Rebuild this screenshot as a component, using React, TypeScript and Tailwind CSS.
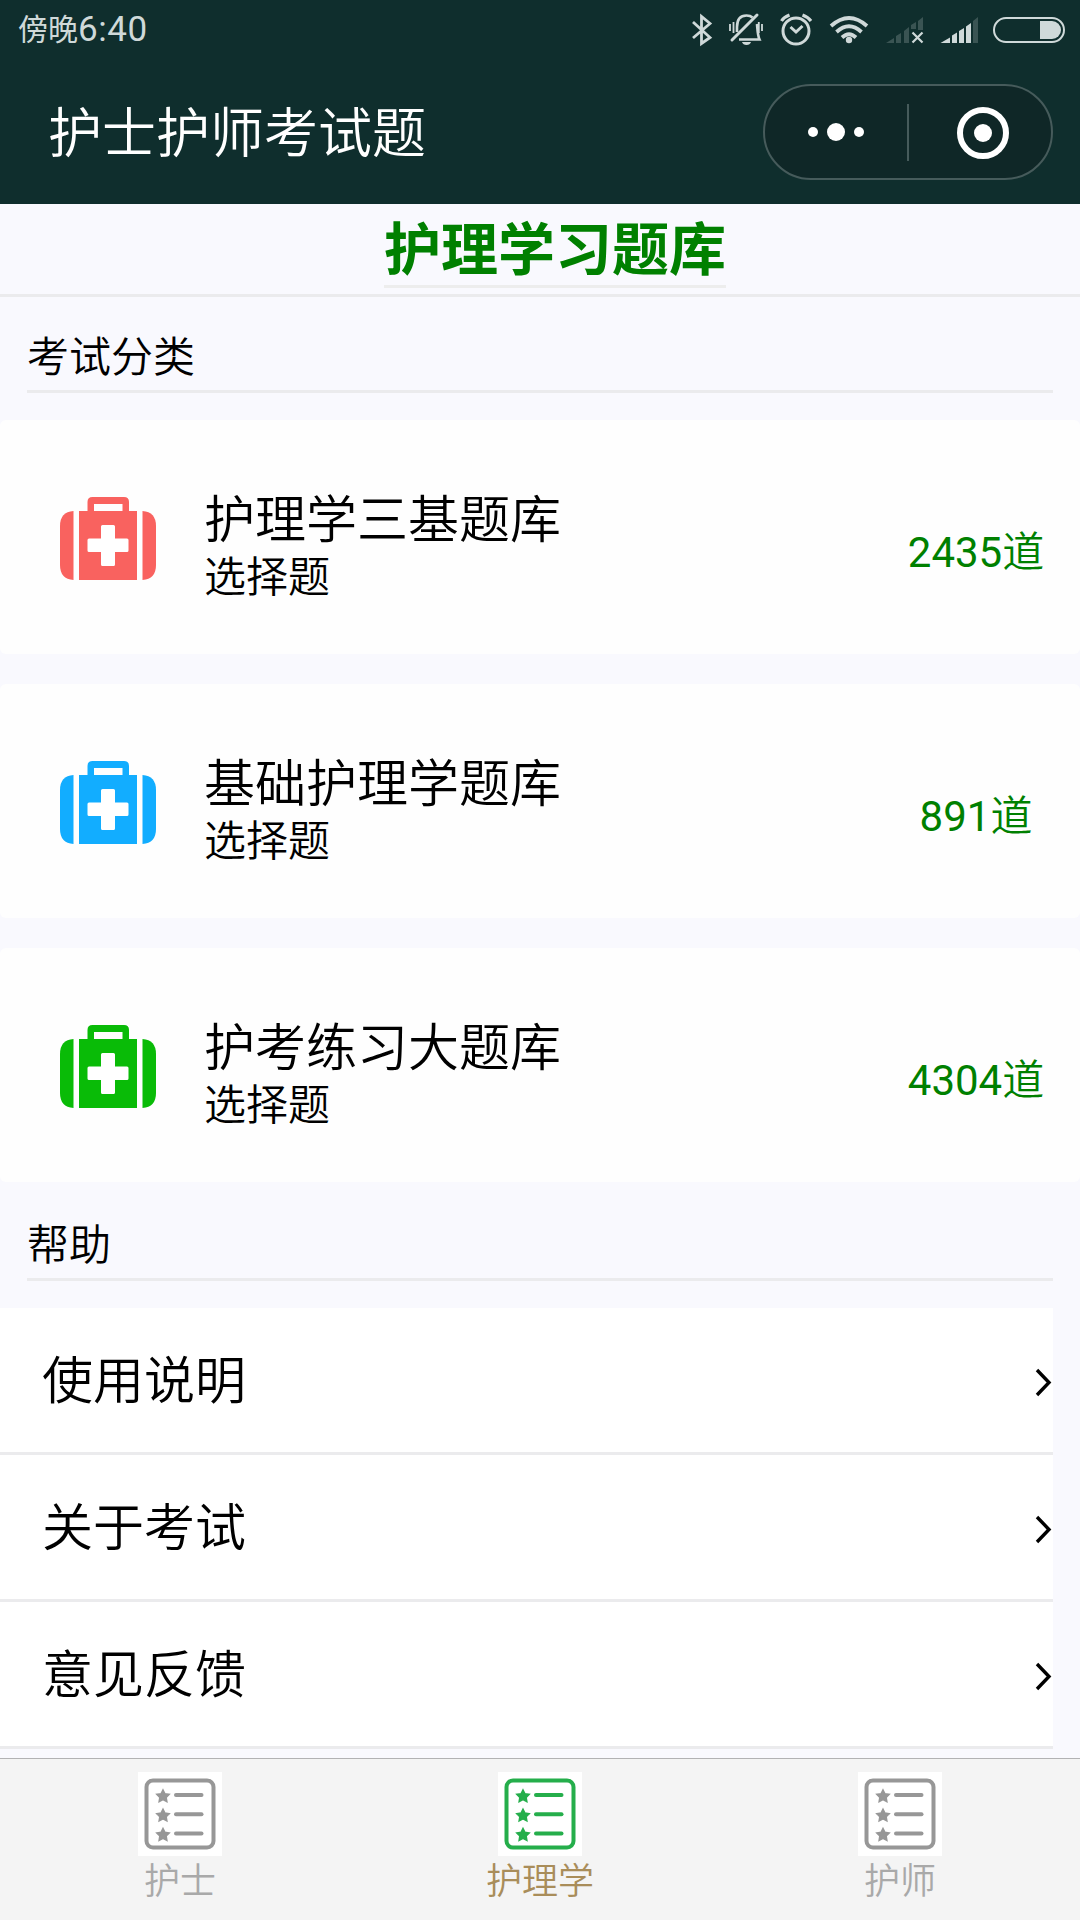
import type { ReactNode } from 'react'

interface Bank {
  title: string
  kind: string
  count: number
  color: string
}

const banks: Bank[] = [
  { title: '护理学三基题库', kind: '选择题', count: 2435, color: '#f9625f' },
  { title: '基础护理学题库', kind: '选择题', count: 891, color: '#12adff' },
  { title: '护考练习大题库', kind: '选择题', count: 4304, color: '#09bb07' },
]

const helpItems = ['使用说明', '关于考试', '意见反馈']

const tabs = [
  { label: '护士', active: false },
  { label: '护理学', active: true },
  { label: '护师', active: false },
]

// every slot shares the status bar's coordinate system, x is its left edge
function StatusIcon({ x, w, children }: { x: number; w: number; children: ReactNode }) {
  return (
    <svg width={w} height={60} viewBox={`${x} 0 ${w} 60`} fill="none" stroke="#cfd9d9" strokeWidth={2.6}>
      {children}
    </svg>
  )
}

function StatusBar() {
  return (
    <div className="flex h-[60px] items-center justify-between pl-[18px]">
      <div className="flex items-center text-[30px] leading-[60px] text-[#cfd9d9]">
        <span>傍晚</span>
        <span className="text-[35px] tracking-[0.6px]">6:40</span>
      </div>
      <div className="flex">
        <StatusIcon x={688} w={32}>
          <path d="M693 22 L710 37.5 L701.5 43.5 V16.5 L710 23.5 L693 38" strokeWidth={2.8} />
        </StatusIcon>
        <StatusIcon x={720} w={52}>
          <path d="M737 32 V27 C737 19 741 15.5 746.5 15.5 C749 15.5 751 16 752.5 17.5 M757 24 C757.5 29 757.5 35 759.5 39.5 H739" />
          <path d="M732 40 L757 15" strokeWidth={3} strokeLinecap="round" />
          <path d="M742 42 H751 Q750 45 746.5 45 Q743 45 742 42 Z" fill="#cfd9d9" stroke="none" />
          <path d="M730 24 V31 M733.5 22 V33 M758.8 22 V33 M762 24 V31" strokeWidth={1.8} />
        </StatusIcon>
        <StatusIcon x={772} w={48}>
          <circle cx={796} cy={31} r={13} strokeWidth={3} />
          <path d="M790.5 27 L796 32 L802.5 26" strokeWidth={3} />
          <path d="M781.5 21 Q784 17 789.5 15 M802.5 15 Q808 17 811 21" strokeWidth={3.2} />
        </StatusIcon>
        <StatusIcon x={820} w={58}>
          <path d="M831 26 Q849 10 867 26" strokeWidth={3.8} />
          <path d="M836.5 32 Q849 20.5 861.5 32" strokeWidth={3.8} />
          <path d="M842 37.5 Q849 31 856 37.5" strokeWidth={3.8} />
          <circle cx={849} cy={40} r={3.2} fill="#cfd9d9" stroke="none" />
        </StatusIcon>
        <StatusIcon x={878} w={54}>
          <path
            d="M886 43 L894 38 V43 Z M896 43 V36 L901 33 V43 Z M904 43 V31 L909 27 V43 Z M911 29 V25 L916 22 V29 Z M918 30 V21 L923 17 V30 Z"
            fill="#3a5453"
            stroke="none"
          />
          <path d="M912.5 32.5 L922.5 42.5 M922.5 32.5 L912.5 42.5" strokeWidth={2.2} />
        </StatusIcon>
        <StatusIcon x={932} w={54}>
          <path
            d="M940.5 43 L950 37.5 V43 Z M952 43 V35.5 L957 32.5 V43 Z M959 43 V31 L964 28 V43 Z M966 43 V26.5 L971 23 V43 Z"
            fill="#cfd9d9"
            stroke="none"
          />
          <path d="M973 43 V21 L978 17 V43 Z" fill="#3a5453" stroke="none" />
        </StatusIcon>
        <StatusIcon x={986} w={94}>
          <rect x={994} y={18} width={70} height={24} rx={12} strokeWidth={2} />
          <path d="M1040 21 H1052 A9 9 0 0 1 1052 39 H1040 Z" fill="#cfd9d9" stroke="none" />
        </StatusIcon>
      </div>
    </div>
  )
}

function Capsule() {
  return (
    <div className="flex h-24 w-[290px] items-center rounded-full border-2 border-[#465b5b] bg-[#0f2727]">
      <div className="flex w-[142px] items-center justify-center gap-[9px]">
        <span className="size-2.5 rounded-full bg-white" />
        <span className="size-[18px] rounded-full bg-white" />
        <span className="size-2.5 rounded-full bg-white" />
      </div>
      <div className="h-[57px] w-0.5 bg-[#465b5b]" />
      <div className="flex flex-1 items-center justify-center pl-1.5">
        <div className="mt-0.5 flex size-[52px] items-center justify-center rounded-full border-[6px] border-white">
          <span className="size-[18px] rounded-full bg-white" />
        </div>
      </div>
    </div>
  )
}

function KitIcon({ color }: { color: string }) {
  return (
    <svg width={96} height={83} viewBox="0 0 96 83" fill={color}>
      <path d="M13.5 14 V83 Q0 82 0 68 V29 Q0 15 13.5 14 Z" />
      <path d="M82.5 14 V83 Q96 82 96 68 V29 Q96 15 82.5 14 Z" />
      <path
        fillRule="evenodd"
        d="M27.5 14 V5 Q27.5 0 32.5 0 H64 Q69 0 69 5 V14 H77 V83 H19 V14 Z M34 7 V14 H62.5 V7 Z"
      />
      <path
        d="M42.5 28 H53.5 Q55 28 55 29.5 V41.5 H67 Q68.5 41.5 68.5 43 V53.5 Q68.5 55 67 55 H55 V67.5 Q55 69 53.5 69 H42.5 Q41 69 41 67.5 V55 H29 Q27.5 55 27.5 53.5 V43 Q27.5 41.5 29 41.5 H41 V29.5 Q41 28 42.5 28 Z"
        fill="#fff"
      />
    </svg>
  )
}

function SectionTitle({ children }: { children: ReactNode }) {
  return (
    <h2 className="mx-[27px] h-[72px] border-b-[3px] border-[#ebebed] text-[42px] leading-[74px] font-[350]">
      {children}
    </h2>
  )
}

function BankCard({ bank }: { bank: Bank }) {
  return (
    <div className="flex h-[234px] items-start rounded-md bg-[#fefefe] pr-[26px] pl-[60px]">
      <div className="mt-[77px]">
        <KitIcon color={bank.color} />
      </div>
      <div className="mt-[72px] ml-12 flex-1 font-[350]">
        <div className="text-[51px] leading-[57px]">{bank.title}</div>
        <div className="text-[42px] leading-[57px]">{bank.kind}</div>
      </div>
      <div className="mt-[104px] w-[156px] text-center text-[42px] leading-[57px] text-[#008000]">
        {bank.count}
        <span className="font-[350]">道</span>
      </div>
    </div>
  )
}

const star = 'l1.9 3.8 4.2 0.6 -3 3 0.7 4.2 -3.8 -2 -3.8 2 0.7 -4.2 -3 -3 4.2 -0.6z'

function ListIcon({ color }: { color: string }) {
  return (
    <svg width={84} height={84} viewBox="0 0 84 84" className="bg-white" fill="none" stroke={color} strokeWidth={4}>
      <rect x={8.5} y={8.5} width={67} height={67} rx={6.5} />
      {[23, 42.3, 61.6].map((y) => (
        <g key={y}>
          <path d={`M25 ${y - 5}${star}`} fill={color} strokeWidth={1.6} />
          <path d={`M38 ${y}H63.5`} strokeLinecap="round" />
        </g>
      ))}
    </svg>
  )
}

export default function App() {
  return (
    <div className="flex h-[1920px] w-[1080px] flex-col overflow-hidden bg-[#f9f9fe] font-[Roboto,'Noto_Sans_CJK_SC',sans-serif] text-black">
      <header className="h-[204px] shrink-0 bg-[#0f2e2d]">
        <StatusBar />
        <div className="flex h-36 items-center justify-between pr-[27px] pl-12">
          <h1 className="pt-1 text-[54px] font-[350] text-white">护士护师考试题</h1>
          <Capsule />
        </div>
      </header>

      <main className="flex-1">
        <div className="flex h-[93px] justify-center border-b-[3px] border-[#ebebed] pl-[30px]">
          <div className="h-[84px] border-b-[3px] border-[#ededed] text-[57px] leading-[94px] font-bold text-[#008000]">
            护理学习题库
          </div>
        </div>

        <section className="pt-6">
          <SectionTitle>考试分类</SectionTitle>
          <div className="mt-[27px] flex flex-col gap-[30px]">
            {banks.map((bank) => (
              <BankCard key={bank.title} bank={bank} />
            ))}
          </div>
        </section>

        <section className="pt-[27px]">
          <SectionTitle>帮助</SectionTitle>
          <ul className="mt-[27px] w-[1053px] bg-white">
            {helpItems.map((item) => (
              <li
                key={item}
                className="flex h-[147px] items-center justify-between border-b-[3px] border-[#ebebed] pt-1 pr-px pl-[42px] text-[51px] font-[350]"
              >
                {item}
                <svg width={17} height={30} viewBox="0 0 17 30" fill="none" stroke="#000" strokeWidth={3.4}>
                  <path d="M2 3 L14 15.5 L2 28" />
                </svg>
              </li>
            ))}
          </ul>
        </section>
      </main>

      <nav className="flex h-[162px] shrink-0 border-t border-[#b2b2b4] bg-[#f4f4f4]">
        {tabs.map((tab) => (
          <div key={tab.label} className="flex flex-1 flex-col items-center pt-[13px]">
            <ListIcon color={tab.active ? '#25ae4b' : '#979797'} />
            <span
              className={`text-[36px] leading-[53px] font-[350] ${tab.active ? 'text-[#a98d5a]' : 'text-[#a9a9a9]'}`}
            >
              {tab.label}
            </span>
          </div>
        ))}
      </nav>
    </div>
  )
}
